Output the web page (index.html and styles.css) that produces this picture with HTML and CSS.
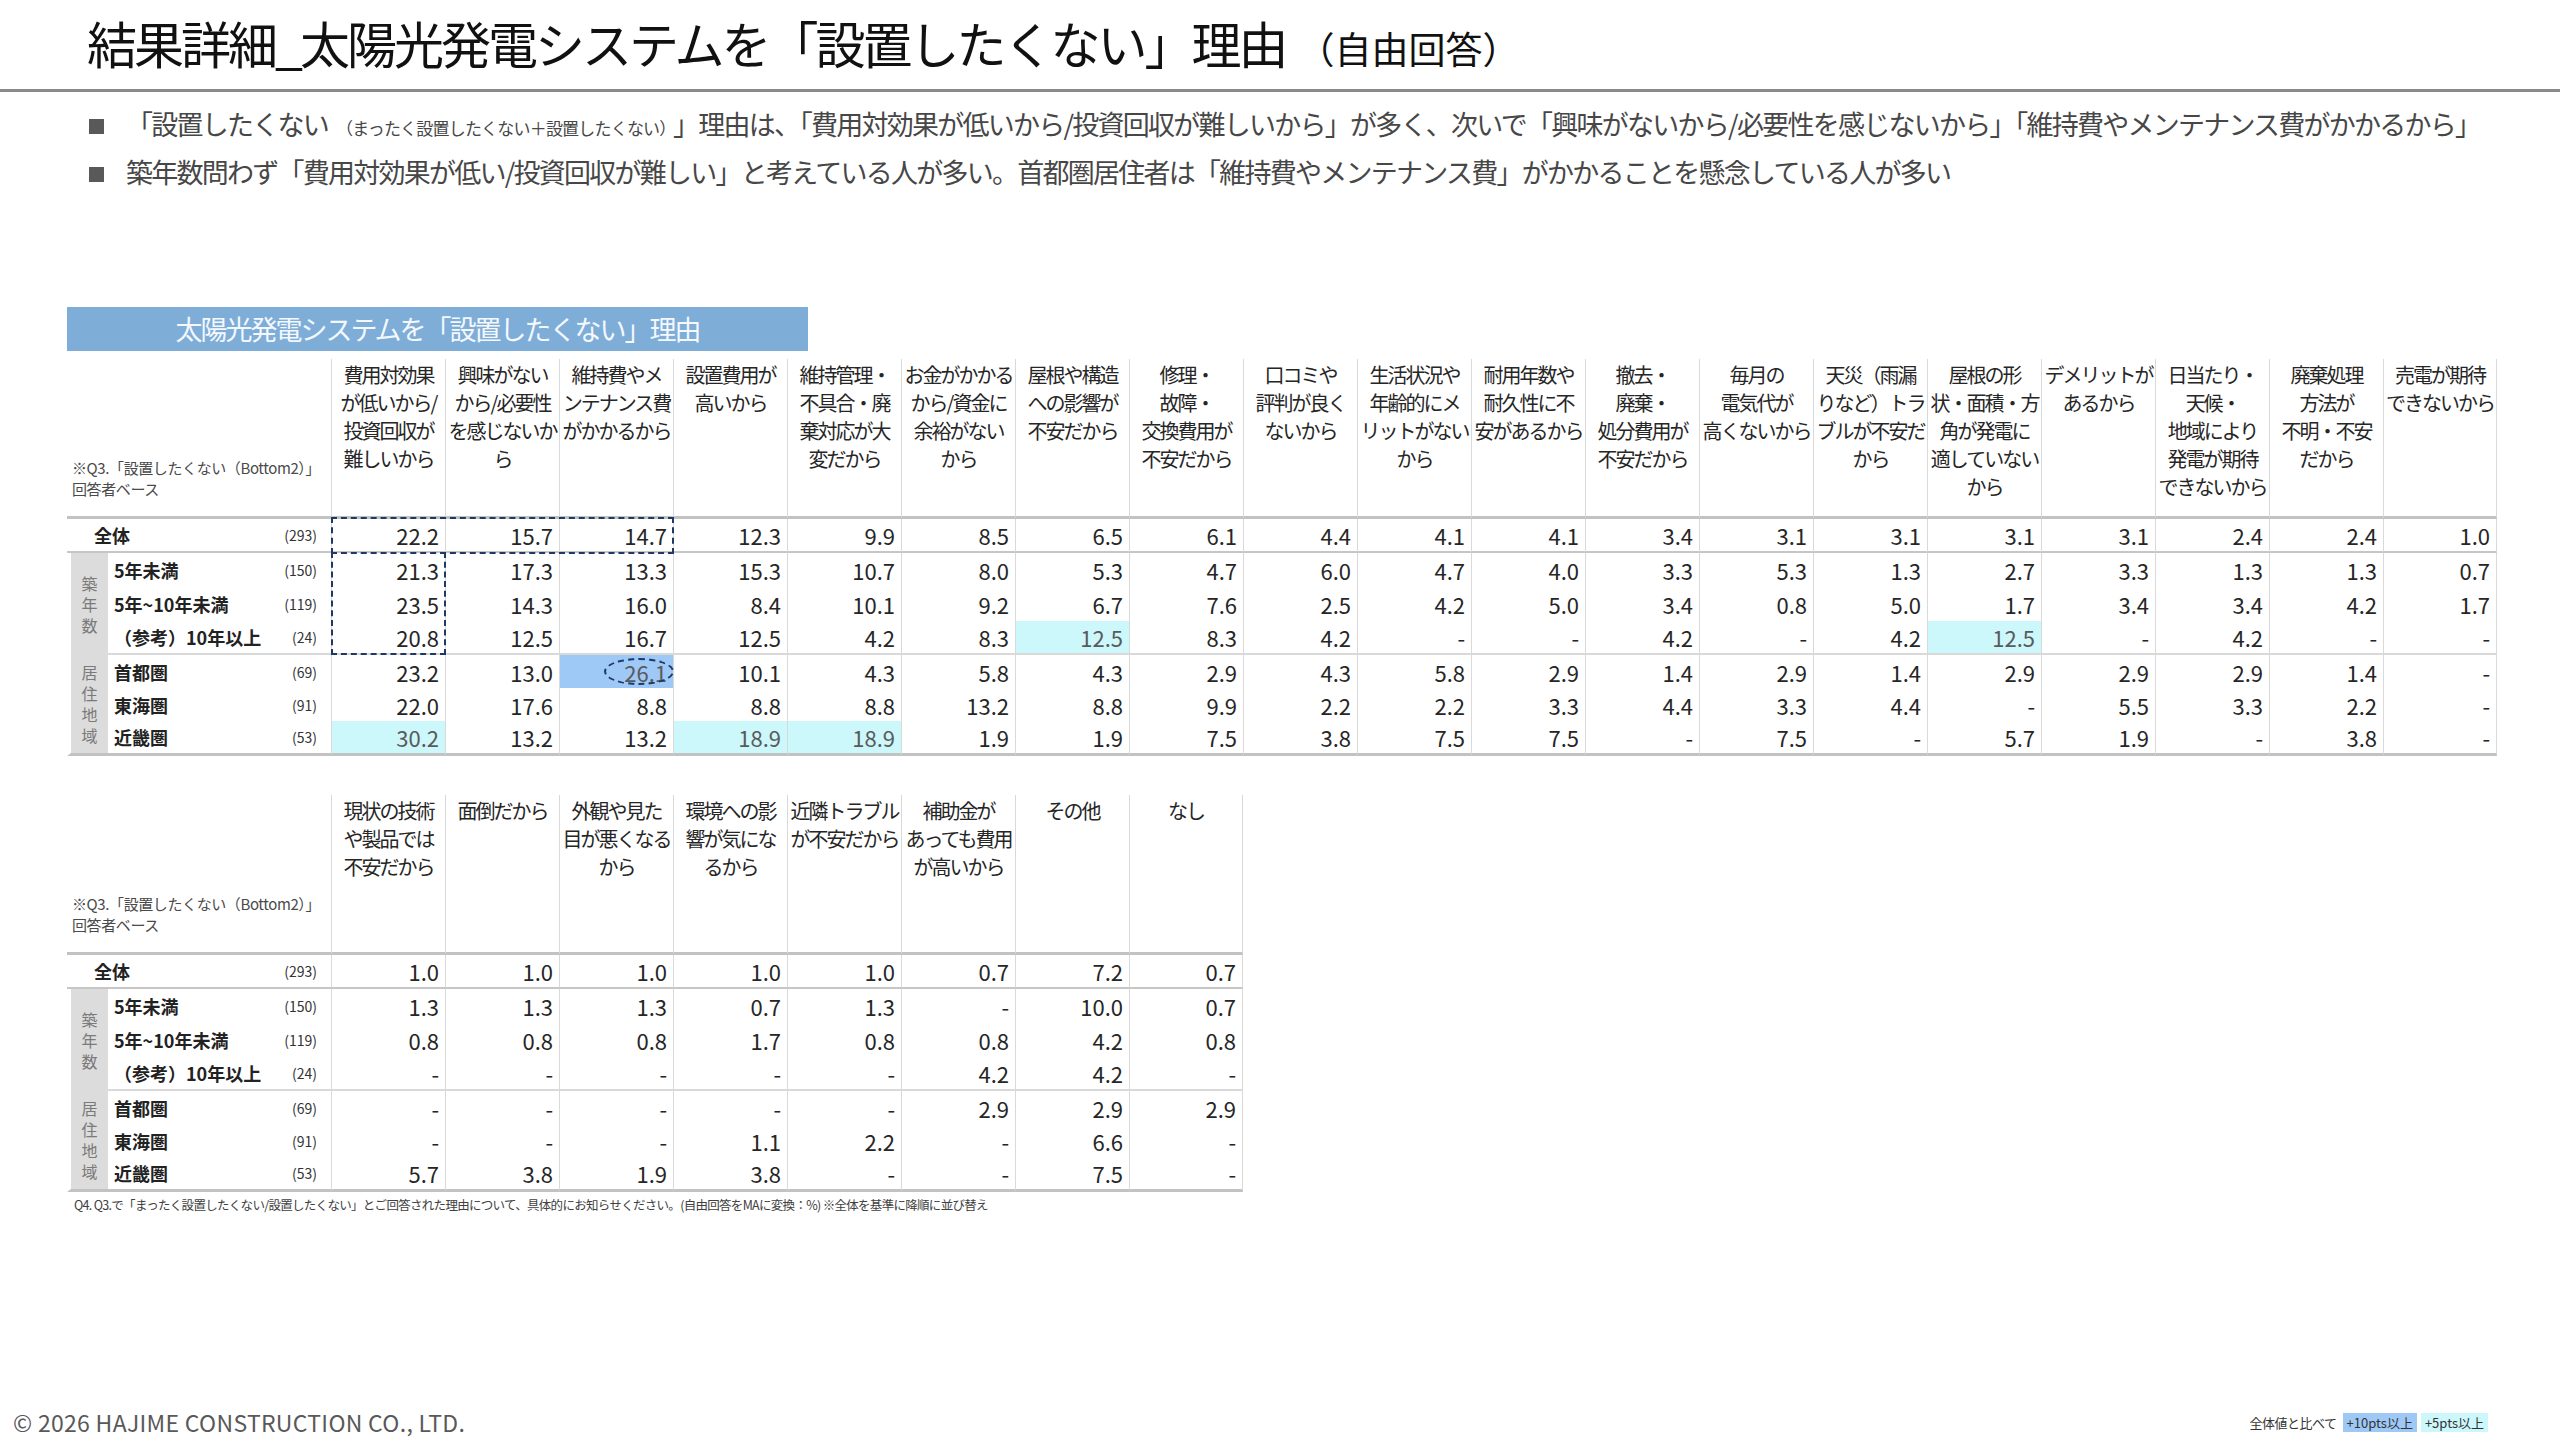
FILE: index.html
```html
<!DOCTYPE html>
<html lang="ja">
<head>
<meta charset="utf-8">
<title>結果詳細_太陽光発電システムを「設置したくない」理由</title>
<link rel="stylesheet" href="styles.css">
</head>
<body>
<div class="page">
  <header class="head">
    <h1 class="title">結果詳細_太陽光発電システムを「設置したくない」理由<span class="sub">（自由回答）</span></h1>
  </header>

  <ul class="points">
    <li>「設置したくない<small class="aside">（まったく設置したくない＋設置したくない）</small>」理由は、「費用対効果が低いから/投資回収が難しいから」が多く、次いで「興味がないから/必要性を感じないから」「維持費やメンテナンス費がかかるから」</li>
    <li>築年数問わず「費用対効果が低い/投資回収が難しい」と考えている人が多い。首都圏居住者は「維持費やメンテナンス費」がかかることを懸念している人が多い</li>
  </ul>

  <section class="result">
    <div class="bar">太陽光発電システムを「設置したくない」理由</div>

    <div class="tbl-wrap">
      <table class="grid wide">
        <colgroup>
          <col class="c-g"><col class="c-l"><col class="c-n">
          <col class="c-d"><col class="c-d"><col class="c-d"><col class="c-d"><col class="c-d"><col class="c-d"><col class="c-d"><col class="c-d"><col class="c-d"><col class="c-d"><col class="c-d"><col class="c-d"><col class="c-d"><col class="c-d"><col class="c-d"><col class="c-d"><col class="c-d"><col class="c-d"><col class="c-d">
        </colgroup>
        <thead>
          <tr>
            <th colspan="3" class="base">※Q3.「設置したくない（Bottom2）」<br>回答者ベース</th>
            <th class="h">費用対効果<br>が低いから/<br>投資回収が<br>難しいから</th>
            <th class="h">興味がない<br>から/必要性<br>を感じないか<br>ら</th>
            <th class="h">維持費やメ<br>ンテナンス費<br>がかかるから</th>
            <th class="h">設置費用が<br>高いから</th>
            <th class="h">維持管理・<br>不具合・廃<br>棄対応が大<br>変だから</th>
            <th class="h">お金がかかる<br>から/資金に<br>余裕がない<br>から</th>
            <th class="h">屋根や構造<br>への影響が<br>不安だから</th>
            <th class="h">修理・<br>故障・<br>交換費用が<br>不安だから</th>
            <th class="h">口コミや<br>評判が良く<br>ないから</th>
            <th class="h">生活状況や<br>年齢的にメ<br>リットがない<br>から</th>
            <th class="h">耐用年数や<br>耐久性に不<br>安があるから</th>
            <th class="h">撤去・<br>廃棄・<br>処分費用が<br>不安だから</th>
            <th class="h">毎月の<br>電気代が<br>高くないから</th>
            <th class="h">天災（雨漏<br>りなど）トラ<br>ブルが不安だ<br>から</th>
            <th class="h">屋根の形<br>状・面積・方<br>角が発電に<br>適していない<br>から</th>
            <th class="h">デメリットが<br>あるから</th>
            <th class="h">日当たり・<br>天候・<br>地域により<br>発電が期待<br>できないから</th>
            <th class="h">廃棄処理<br>方法が<br>不明・不安<br>だから</th>
            <th class="h last-col">売電が期待<br>できないから</th>
          </tr>
        </thead>
        <tbody>
          <tr class="total">
            <th colspan="2" class="lab top">全体</th><td class="n">(293)</td>
            <td class="v">22.2</td><td class="v">15.7</td><td class="v">14.7</td><td class="v">12.3</td><td class="v">9.9</td><td class="v">8.5</td><td class="v">6.5</td><td class="v">6.1</td><td class="v">4.4</td><td class="v">4.1</td><td class="v">4.1</td><td class="v">3.4</td><td class="v">3.1</td><td class="v">3.1</td><td class="v">3.1</td><td class="v">3.1</td><td class="v">2.4</td><td class="v">2.4</td><td class="v last-col">1.0</td>
          </tr>
          <tr class="r34">
            <th rowspan="3" class="grp">築<br>年<br>数</th>
            <th class="lab">5年未満</th><td class="n">(150)</td>
            <td class="v">21.3</td><td class="v">17.3</td><td class="v">13.3</td><td class="v">15.3</td><td class="v">10.7</td><td class="v">8.0</td><td class="v">5.3</td><td class="v">4.7</td><td class="v">6.0</td><td class="v">4.7</td><td class="v">4.0</td><td class="v">3.3</td><td class="v">5.3</td><td class="v">1.3</td><td class="v">2.7</td><td class="v">3.3</td><td class="v">1.3</td><td class="v">1.3</td><td class="v last-col">0.7</td>
          </tr>
          <tr class="r34">
            <th class="lab">5年~10年未満</th><td class="n">(119)</td>
            <td class="v">23.5</td><td class="v">14.3</td><td class="v">16.0</td><td class="v">8.4</td><td class="v">10.1</td><td class="v">9.2</td><td class="v">6.7</td><td class="v">7.6</td><td class="v">2.5</td><td class="v">4.2</td><td class="v">5.0</td><td class="v">3.4</td><td class="v">0.8</td><td class="v">5.0</td><td class="v">1.7</td><td class="v">3.4</td><td class="v">3.4</td><td class="v">4.2</td><td class="v last-col">1.7</td>
          </tr>
          <tr class="r34 sep">
            <th class="lab">（参考）10年以上</th><td class="n">(24)</td>
            <td class="v">20.8</td><td class="v">12.5</td><td class="v">16.7</td><td class="v">12.5</td><td class="v">4.2</td><td class="v">8.3</td><td class="v up5">12.5</td><td class="v">8.3</td><td class="v">4.2</td><td class="v">-</td><td class="v">-</td><td class="v">4.2</td><td class="v">-</td><td class="v">4.2</td><td class="v up5">12.5</td><td class="v">-</td><td class="v">4.2</td><td class="v">-</td><td class="v last-col">-</td>
          </tr>
          <tr class="r33">
            <th rowspan="3" class="grp region">居<br>住<br>地<br>域</th>
            <th class="lab">首都圏</th><td class="n">(69)</td>
            <td class="v">23.2</td><td class="v">13.0</td><td class="v up10"><span class="ring"></span>26.1</td><td class="v">10.1</td><td class="v">4.3</td><td class="v">5.8</td><td class="v">4.3</td><td class="v">2.9</td><td class="v">4.3</td><td class="v">5.8</td><td class="v">2.9</td><td class="v">1.4</td><td class="v">2.9</td><td class="v">1.4</td><td class="v">2.9</td><td class="v">2.9</td><td class="v">2.9</td><td class="v">1.4</td><td class="v last-col">-</td>
          </tr>
          <tr class="r33">
            <th class="lab">東海圏</th><td class="n">(91)</td>
            <td class="v">22.0</td><td class="v">17.6</td><td class="v">8.8</td><td class="v">8.8</td><td class="v">8.8</td><td class="v">13.2</td><td class="v">8.8</td><td class="v">9.9</td><td class="v">2.2</td><td class="v">2.2</td><td class="v">3.3</td><td class="v">4.4</td><td class="v">3.3</td><td class="v">4.4</td><td class="v">-</td><td class="v">5.5</td><td class="v">3.3</td><td class="v">2.2</td><td class="v last-col">-</td>
          </tr>
          <tr class="r33 end">
            <th class="lab">近畿圏</th><td class="n">(53)</td>
            <td class="v up5">30.2</td><td class="v">13.2</td><td class="v">13.2</td><td class="v up5">18.9</td><td class="v up5">18.9</td><td class="v">1.9</td><td class="v">1.9</td><td class="v">7.5</td><td class="v">3.8</td><td class="v">7.5</td><td class="v">7.5</td><td class="v">-</td><td class="v">7.5</td><td class="v">-</td><td class="v">5.7</td><td class="v">1.9</td><td class="v">-</td><td class="v">3.8</td><td class="v last-col">-</td>
          </tr>
        </tbody>
      </table>
      <div class="dash dash-total"></div>
      <div class="dash dash-col"></div>
    </div>

    <div class="tbl-wrap second">
      <table class="grid narrow">
        <colgroup>
          <col class="c-g"><col class="c-l"><col class="c-n">
          <col class="c-d"><col class="c-d"><col class="c-d"><col class="c-d"><col class="c-d"><col class="c-d"><col class="c-d"><col class="c-d">
        </colgroup>
        <thead>
          <tr>
            <th colspan="3" class="base">※Q3.「設置したくない（Bottom2）」<br>回答者ベース</th>
            <th class="h">現状の技術<br>や製品では<br>不安だから</th>
            <th class="h">面倒だから</th>
            <th class="h">外観や見た<br>目が悪くなる<br>から</th>
            <th class="h">環境への影<br>響が気にな<br>るから</th>
            <th class="h">近隣トラブル<br>が不安だから</th>
            <th class="h">補助金が<br>あっても費用<br>が高いから</th>
            <th class="h">その他</th>
            <th class="h last-col">なし</th>
          </tr>
        </thead>
        <tbody>
          <tr class="total">
            <th colspan="2" class="lab top">全体</th><td class="n">(293)</td>
            <td class="v">1.0</td><td class="v">1.0</td><td class="v">1.0</td><td class="v">1.0</td><td class="v">1.0</td><td class="v">0.7</td><td class="v">7.2</td><td class="v last-col">0.7</td>
          </tr>
          <tr class="r34">
            <th rowspan="3" class="grp">築<br>年<br>数</th>
            <th class="lab">5年未満</th><td class="n">(150)</td>
            <td class="v">1.3</td><td class="v">1.3</td><td class="v">1.3</td><td class="v">0.7</td><td class="v">1.3</td><td class="v">-</td><td class="v">10.0</td><td class="v last-col">0.7</td>
          </tr>
          <tr class="r34">
            <th class="lab">5年~10年未満</th><td class="n">(119)</td>
            <td class="v">0.8</td><td class="v">0.8</td><td class="v">0.8</td><td class="v">1.7</td><td class="v">0.8</td><td class="v">0.8</td><td class="v">4.2</td><td class="v last-col">0.8</td>
          </tr>
          <tr class="r34 sep">
            <th class="lab">（参考）10年以上</th><td class="n">(24)</td>
            <td class="v">-</td><td class="v">-</td><td class="v">-</td><td class="v">-</td><td class="v">-</td><td class="v">4.2</td><td class="v">4.2</td><td class="v last-col">-</td>
          </tr>
          <tr class="r33">
            <th rowspan="3" class="grp region">居<br>住<br>地<br>域</th>
            <th class="lab">首都圏</th><td class="n">(69)</td>
            <td class="v">-</td><td class="v">-</td><td class="v">-</td><td class="v">-</td><td class="v">-</td><td class="v">2.9</td><td class="v">2.9</td><td class="v last-col">2.9</td>
          </tr>
          <tr class="r33">
            <th class="lab">東海圏</th><td class="n">(91)</td>
            <td class="v">-</td><td class="v">-</td><td class="v">-</td><td class="v">1.1</td><td class="v">2.2</td><td class="v">-</td><td class="v">6.6</td><td class="v last-col">-</td>
          </tr>
          <tr class="r33 end">
            <th class="lab">近畿圏</th><td class="n">(53)</td>
            <td class="v">5.7</td><td class="v">3.8</td><td class="v">1.9</td><td class="v">3.8</td><td class="v">-</td><td class="v">-</td><td class="v">7.5</td><td class="v last-col">-</td>
          </tr>
        </tbody>
      </table>
    </div>

    <p class="note">Q4. Q3.で「まったく設置したくない/設置したくない」とご回答された理由について、具体的にお知らせください。(自由回答をMAに変換：%) ※全体を基準に降順に並び替え</p>
  </section>

  <footer class="foot">
    <p class="copy">© 2026 HAJIME CONSTRUCTION CO., LTD.</p>
    <div class="legend">
      <span class="legend-lead">全体値と比べて</span>
      <span class="chip chip-10">+10pts以上</span>
      <span class="chip chip-5">+5pts以上</span>
    </div>
  </footer>
</div>
</body>
</html>
```

FILE: styles.css
```css
* { box-sizing: border-box; }

html, body {
  margin: 0;
  padding: 0;
  background: #ffffff;
}

body {
  font-family: "Noto Sans CJK JP", "Noto Sans", sans-serif;
  color: #262626;
}

.page {
  width: 2560px;
  height: 1440px;
  display: flex;
  flex-direction: column;
  overflow: hidden;
}

/* ---------- title ---------- */
.head {
  height: 92px;
  padding: 0 0 6px 87px;
  border-bottom: 3px solid #8a8a8a;
  display: flex;
  align-items: center;
}

.title {
  margin: 0;
  font-size: 50px;
  font-weight: 400;
  letter-spacing: -3px;
  line-height: 1;
  color: #111111;
  white-space: nowrap;
}

.title .sub {
  font-size: 37px;
  letter-spacing: 0;
  margin-left: 12px;
}

/* ---------- bullets ---------- */
.points {
  list-style: none;
  margin: 0;
  padding: 10px 0 0 89px;
}

.points li {
  font-size: 27px;
  line-height: 44px;
  letter-spacing: -1.75px;
  color: #474747;
  white-space: nowrap;
}

.points li::before {
  content: "";
  display: inline-block;
  width: 15px;
  height: 15px;
  background: #595959;
  margin-right: 22px;
  vertical-align: 1px;
}

.points .aside {
  font-size: 17px;
  letter-spacing: -0.8px;
  margin: 0 6px 0 8px;
}

/* ---------- result block ---------- */
.result {
  margin: 113px 0 0 67px;
}

.bar {
  width: 741px;
  height: 44px;
  background: #7eadd8;
  color: #f4f8fc;
  font-size: 27px;
  letter-spacing: -2px;
  line-height: 44px;
  text-align: center;
}

.tbl-wrap {
  position: relative;
  width: max-content;
  margin-top: 8px;
}

.tbl-wrap.second {
  margin-top: 39px;
}

.grid {
  border-collapse: separate;
  border-spacing: 0;
  table-layout: fixed;
}

.grid.wide { width: 2430px; }
.grid.narrow { width: 1176px; }

.c-g { width: 41px; }
.c-l { width: 168px; }
.c-n { width: 55px; }
.c-d { width: 114px; }

.grid th,
.grid td {
  padding: 0;
  font-weight: 400;
}

.grid thead tr { height: 160px; }

.grid thead th {
  border-bottom: 3px solid #c2c2c2;
}

.grid th.base {
  vertical-align: bottom;
  text-align: left;
  padding: 0 0 17px 5px;
  font-size: 15px;
  line-height: 21px;
  letter-spacing: -0.4px;
  color: #4a4a4a;
  white-space: nowrap;
}

.grid th.h {
  vertical-align: top;
  text-align: center;
  padding-top: 2px;
  font-size: 20px;
  line-height: 28px;
  letter-spacing: -2px;
  color: #262626;
  white-space: nowrap;
  border-left: 1px solid #d9d9d9;
}

.grid .last-col {
  border-right: 1px solid #d9d9d9;
}

.grid tr.total { height: 34px; }
.grid tr.r34 { height: 34px; }
.grid tr.r33 { height: 33px; }

.grid tr.total > * {
  border-bottom: 2px solid #c6c6c6;
}

.grid tr.sep > * {
  border-bottom: 2px solid #d9d9d9;
}

.grid tr.end > *,
.grid th.region {
  border-bottom: 3px solid #c2c2c2;
}

.grid th.lab {
  text-align: left;
  vertical-align: middle;
  padding-left: 6px;
  font-size: 18px;
  font-weight: 700;
  color: #222222;
  white-space: nowrap;
}

.grid th.lab.top {
  padding-left: 27px;
}

.grid th.grp {
  background: #dcdcdc;
  border-left: 4px solid #ffffff;
  color: #7a7a7a;
  font-size: 16px;
  line-height: 21px;
  text-align: center;
  vertical-align: middle;
}

.grid td.n {
  text-align: right;
  padding-right: 14px;
  font-size: 14px;
  color: #333333;
  white-space: nowrap;
}

.grid td.v {
  text-align: right;
  vertical-align: middle;
  padding-right: 6px;
  font-size: 22px;
  color: #262626;
  border-left: 1px solid #d9d9d9;
  white-space: nowrap;
}

.grid td.up5 {
  background: #ccf7fb;
  color: #5a5a5a;
}

.grid td.up10 {
  background: #9ec8f6;
  color: #5a5a5a;
  position: relative;
}

.ring {
  position: absolute;
  right: -1px;
  top: 3px;
  width: 70px;
  height: 27px;
  border: 2px dashed #1f3864;
  border-radius: 50%;
}

.dash {
  position: absolute;
  border: 2px dashed #1f3864;
}

.dash-total {
  left: 264px;
  top: 158px;
  width: 343px;
  height: 37px;
}

.dash-col {
  left: 264px;
  top: 193px;
  width: 115px;
  height: 103px;
  border-top: none;
}

.note {
  margin: 3px 0 0 7px;
  font-size: 12.5px;
  line-height: 20px;
  letter-spacing: -0.7px;
  color: #404040;
  white-space: nowrap;
}

/* ---------- footer ---------- */
.foot {
  margin-top: auto;
  display: flex;
  justify-content: space-between;
  align-items: center;
  padding: 0 72px 2px 13px;
  height: 34px;
}

.copy {
  margin: 0;
  font-size: 23px;
  letter-spacing: 0.3px;
  color: #595959;
}

.legend {
  display: flex;
  align-items: center;
  gap: 4px;
  font-size: 13px;
  color: #333333;
}

.legend-lead {
  margin-right: 2px;
  letter-spacing: -0.5px;
}

.chip {
  padding: 0 4px;
  line-height: 19px;
}

.chip-10 { background: #9ec8f6; }
.chip-5 { background: #ccf7fb; }
```
